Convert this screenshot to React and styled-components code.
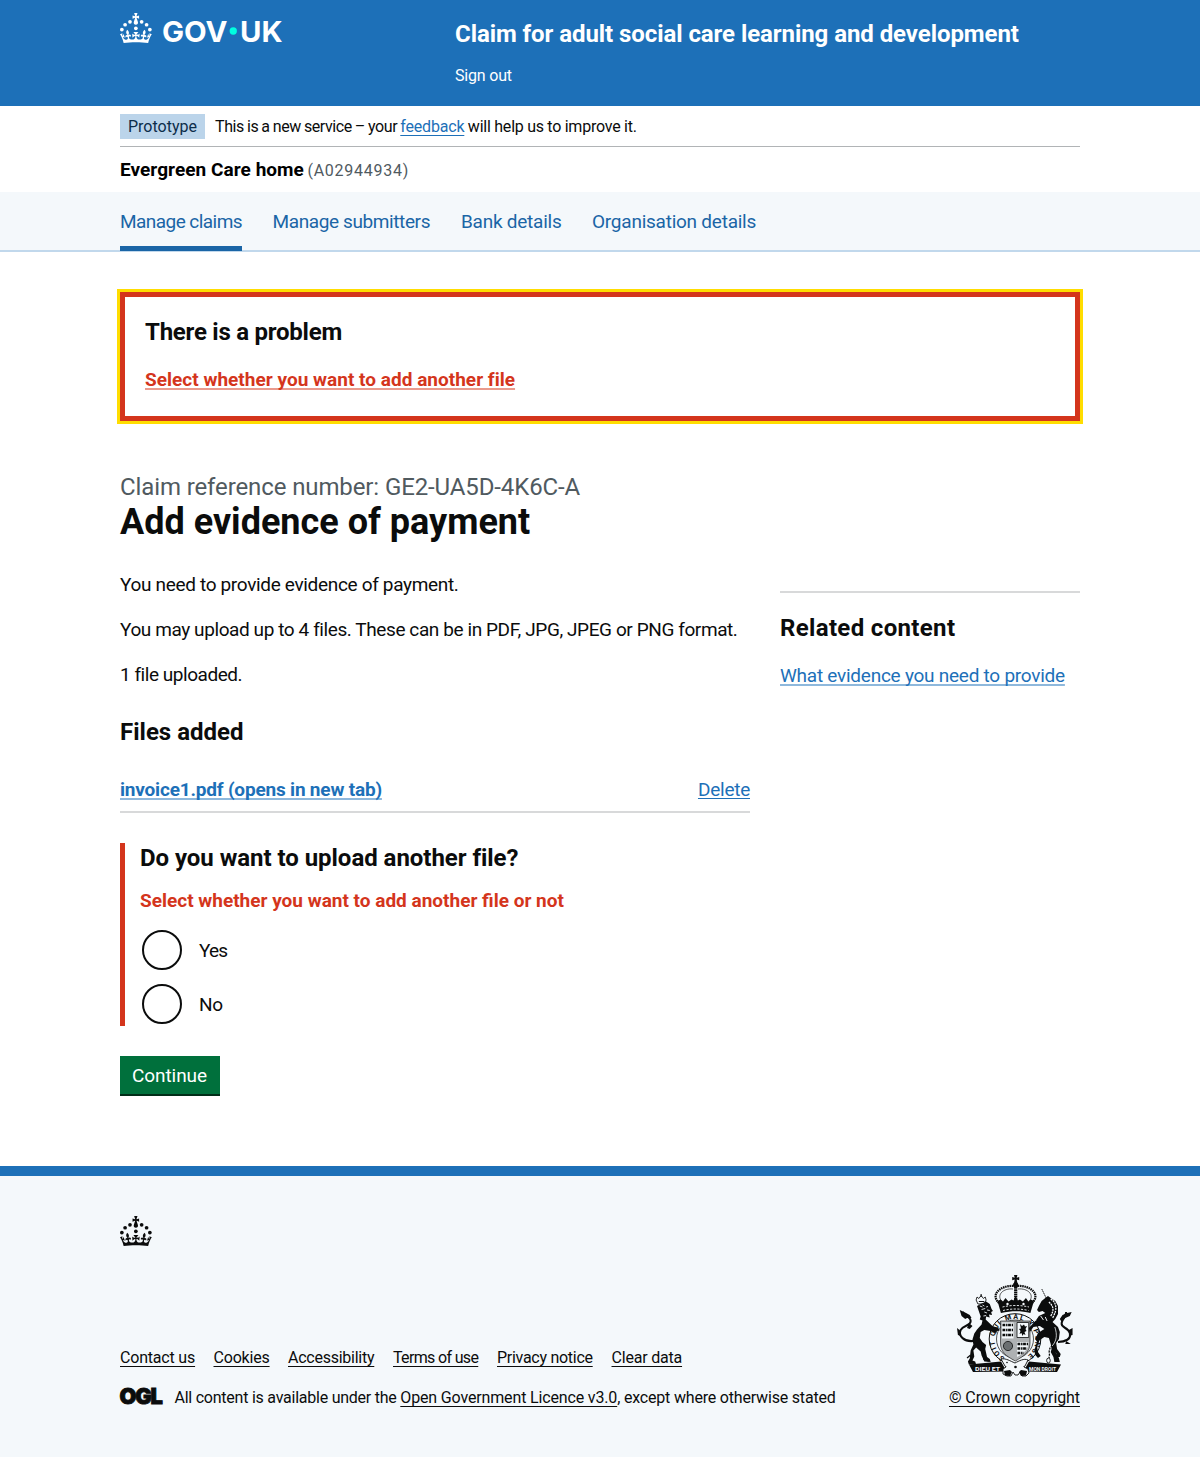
import React from "react";
import styled, { createGlobalStyle } from "styled-components";

const BLUE = "#1d70b8";
const INK = "#0b0c0c";
const RED = "#d4351c";
const PALE = "#f4f8fb";

const Global = createGlobalStyle`
  *, *::before, *::after { box-sizing: border-box; }
  body {
    margin: 0;
    background: #fff;
    color: ${INK};
    font-family: Roboto, "Liberation Sans", sans-serif;
    font-size: 19px;
    line-height: 25px;
  }
  h1, h2, p, ul, fieldset, legend { margin: 0; padding: 0; border: 0; }
  ul { list-style: none; }
`;

const Container = styled.div`
  width: 960px;
  margin: 0 auto;
`;

const Tracked = styled.span`
  letter-spacing: ${(p) => p.$t || 0}px;
  word-spacing: ${(p) => p.$w || 0}px;
  white-space: pre;
`;

const Link = styled.a`
  color: ${(p) => p.$color || BLUE};
  font-weight: ${(p) => (p.$bold ? 700 : 400)};
  letter-spacing: ${(p) => p.$t || 0}px;
  white-space: nowrap;
  text-decoration: underline;
  text-decoration-color: ${(p) => p.$line || "currentColor"};
  text-decoration-thickness: ${(p) => (p.$line ? 2 : 1)}px;
  text-underline-offset: ${(p) => p.$offset || 3}px;
  text-decoration-skip-ink: none;
`;

/* Header */
const Header = styled.header`
  height: 106px;
  background: ${BLUE};
  color: #fff;
`;
const HeaderRow = styled(Container)`
  display: grid;
  grid-template-columns: 335px 1fr;
  padding-top: 13px;
`;
const Logo = styled.svg`
  display: block;
  width: 162px;
  height: 30px;
  overflow: visible;
  fill: #fff;
`;
const LogoText = styled.text`
  font-family: Inter, Roboto, sans-serif;
  font-weight: 700;
  font-size: 58px;
`;
const ServiceName = styled.div`
  padding-top: 6px;
  font-size: 24px;
  line-height: 30px;
  font-weight: 700;
  letter-spacing: -0.07px;
`;
const SignOut = styled.div`
  margin-top: 17px;
  font-size: 16px;
  line-height: 20px;
  letter-spacing: -0.18px;
`;

/* Phase banner and organisation */
const PhaseBanner = styled(Container)`
  display: flex;
  align-items: center;
  height: 41px;
  border-bottom: 1px solid #b1b4b6;
  font-size: 16px;
  line-height: 20px;
`;
const Tag = styled.strong`
  width: 85px;
  height: 25px;
  margin-right: 10px;
  padding: 3px 0 0 8px;
  background: #bbd4ea;
  color: #0c2d4a;
  font-weight: 400;
`;
const PhaseText = styled.span`
  padding-top: 2px;
`;
const Organisation = styled(Container)`
  height: 45px;
  padding-top: 10px;
  color: #000;
  font-weight: 700;
  letter-spacing: 0.05px;
`;
const OrganisationId = styled.span`
  margin-left: 3.5px;
  color: #505a5f;
  font-size: 16px;
  font-weight: 400;
  letter-spacing: 0.75px;
`;

/* Navigation */
const Nav = styled.nav`
  height: 60px;
  background: ${PALE};
  border-bottom: 2px solid #c1d8ec;
`;
const NavList = styled.ul`
  display: flex;
  gap: 30.5px;
  width: 960px;
  height: 59px;
  margin: 0 auto;
`;
const NavItem = styled.li`
  width: ${(p) => p.$width}px;
  padding-top: 17px;
  border-bottom: ${(p) => (p.$active ? `5px solid #1a65a6` : "0")};
  color: #1a65a6;
  letter-spacing: ${(p) => p.$t}px;
  white-space: nowrap;
`;

/* Main */
const ErrorSummary = styled.section`
  height: 129px;
  margin-top: 40px;
  padding: 20px;
  border: 5px solid ${RED};
  outline: 3px solid #ffdd00;
`;
const Heading = styled.h2`
  font-size: 24px;
  line-height: 30px;
  font-weight: 700;
  letter-spacing: ${(p) => p.$t || 0}px;
  margin-bottom: ${(p) => p.$gap}px;
`;
const Columns = styled.div`
  display: grid;
  grid-template-columns: 630px 300px;
  gap: 30px;
  margin-top: 51px;
`;
const Caption = styled.span`
  display: block;
  color: #505a5f;
  font-size: 24px;
  line-height: 30px;
  letter-spacing: -0.11px;
`;
const Title = styled.h1`
  margin-bottom: 29px;
  font-size: 36px;
  line-height: 41px;
  font-weight: 700;
`;
const Paragraph = styled.p`
  margin-bottom: 20px;
  letter-spacing: ${(p) => p.$t}px;
  white-space: nowrap;
`;
const FilesSection = styled.section`
  padding-top: 10px;
`;
const FileRow = styled.div`
  display: flex;
  justify-content: space-between;
  height: 46px;
  padding-top: 10px;
  border-bottom: 2px solid #d8d9da;
`;
const FormGroup = styled.div`
  margin-top: 30px;
  height: 183px;
  padding-left: 15px;
  border-left: 5px solid ${RED};
`;
const ErrorMessage = styled.p`
  margin-bottom: 15px;
  color: ${RED};
  font-weight: 700;
`;
const Radios = styled.div`
  display: grid;
  gap: 10px;
`;
const RadioItem = styled.label`
  display: flex;
  align-items: center;
  gap: 17px;
  height: 44px;
  padding-left: 2px;
  letter-spacing: ${(p) => p.$t}px;
`;
const RadioDot = styled.span`
  width: 40px;
  height: 40px;
  border: 2px solid ${INK};
  border-radius: 50%;
`;
const Button = styled.button`
  display: block;
  width: 100px;
  height: 38px;
  margin-top: 30px;
  padding: 1px 1px 0 0;
  border: 0;
  background: #00703c;
  box-shadow: 0 2px 0 #002d18;
  color: #fff;
  font: inherit;
  letter-spacing: -0.08px;
`;
const Related = styled.aside`
  align-self: start;
  margin-top: 119px;
  padding-top: 20px;
  border-top: 2px solid #d8d9da;
`;

/* Footer */
const Footer = styled.footer`
  height: 292px;
  margin-top: 72px;
  padding-top: 40px;
  border-top: 10px solid ${BLUE};
  background: ${PALE};
  font-size: 16px;
  line-height: 20px;
`;
const FooterCrown = styled.svg`
  display: block;
  width: 32px;
  height: 30px;
  fill: ${INK};
`;
const FooterMeta = styled.div`
  display: flex;
  justify-content: space-between;
  align-items: flex-end;
  margin-top: 29px;
`;
const FooterLinks = styled.ul`
  display: flex;
  gap: 18.5px;
  margin-bottom: 20px;
`;
const LinkItem = styled.li`
  width: ${(p) => p.$width}px;
`;
const Licence = styled.div`
  display: flex;
  align-items: center;
`;
const OglLogo = styled.svg`
  display: block;
  width: 41px;
  height: 18px;
  margin: -5px 13.5px 0 0;
  overflow: visible;
`;
const OglText = styled.text`
  font-family: Inter, sans-serif;
  font-weight: 900;
  font-size: 21.5px;
  fill: ${INK};
  stroke: ${INK};
  stroke-width: 0.9px;
`;
const Copyright = styled.div`
  display: flex;
  flex-direction: column;
  align-items: center;
  gap: 11px;
  width: 131px;
`;
const Arms = styled.svg`
  display: block;
  width: 125px;
  height: 102px;
`;
const Motto = styled.text`
  font-family: Roboto, sans-serif;
  font-weight: 700;
  font-size: ${(p) => p.$size}px;
  fill: ${(p) => p.$fill};
`;

function CrownMark() {
  return (
    <g>
      <circle cx="20" cy="17.6" r="3.7" />
      <circle cx="10.2" cy="23.5" r="3.7" />
      <circle cx="3.7" cy="33.2" r="3.7" />
      <circle cx="31.7" cy="30.6" r="3.7" />
      <circle cx="43.3" cy="17.6" r="3.7" />
      <circle cx="53.2" cy="23.5" r="3.7" />
      <circle cx="59.7" cy="33.2" r="3.7" />
      <path d="M33.1,9.8c.2-.1.3-.3.5-.5l4.6,2.4v-6.8l-4.6,1.5c-.1-.2-.3-.3-.5-.5l1.9-5.9h-6.7l1.9,5.9c-.2.1-.3.3-.5.5l-4.6-1.5v6.8l4.6-2.4c.1.2.3.3.5.5l-2.6,8c-.9,2.8,1.2,5.7,4.1,5.7h0c3,0,5.1-2.9,4.1-5.7l-2.6-8ZM37,37.9s-3.4,3.8-4.1,6.1c2.2,0,4.2-.5,6.4-2.8l-.7,8.5c-2-2.8-4.4-4.1-5.7-3.8.1,3.1.5,6.7,5.8,7.2,3.7.3,6.7-1.5,7-3.8.4-2.6-2-4.3-3.7-1.6-1.4-4.5,2.4-6.1,4.9-3.2-1.9-4.5-1.8-7.7,2.4-10.9,3,4,2.6,7.3-1.2,11.1,2.4-1.3,6.2,0,4,4.6-1.2-2.8-3.7-2.2-4.2.2-.3,1.7.7,3.7,3,4.2,1.9.3,4.7-.9,7-5.9-1.3,0-2.4.7-3.9,1.7l2.4-8c.6,2.3,1.4,3.7,2.2,4.5.6-1.6.5-2.8,0-5.3l5,1.8c-2.6,3.6-5.2,8.7-7.3,17.5-7.4-1.1-15.7-1.7-24.5-1.7h0c-8.8,0-17.1.6-24.5,1.7-2.1-8.9-4.7-13.9-7.3-17.5l5-1.8c-.5,2.5-.6,3.7,0,5.3.8-.8,1.6-2.3,2.2-4.5l2.4,8c-1.5-1-2.6-1.7-3.9-1.7,2.3,5,5.2,6.2,7,5.9,2.3-.4,3.3-2.4,3-4.2-.5-2.4-3-3.1-4.2-.2-2.2-4.6,1.6-6,4-4.6-3.7-3.7-4.2-7.1-1.2-11.1,4.2,3.2,4.3,6.4,2.4,10.9,2.5-2.8,6.3-1.3,4.9,3.2-1.8-2.7-4.1-1-3.7,1.6.3,2.3,3.3,4.1,7,3.8,5.4-.5,5.7-4.2,5.8-7.2-1.3-.2-3.7,1-5.7,3.8l-.7-8.5c2.2,2.3,4.2,2.7,6.4,2.8-.7-2.3-4.1-6.1-4.1-6.1h10.6,0Z" />
    </g>
  );
}

function RoyalArms() {
  return (
    <Arms viewBox="0 0 125 102" fill={INK} stroke="none" aria-label="Royal coat of arms">
      {/* crown */}
      <path d="M62 0h3.4l-.7 2.7 2.5-.8v3.4l-2.5-.8.7 3.5h-3.4l.7-3.5-2.5.8V1.900l2.500.800z" />
      <circle cx="63.700" cy="10" r="2.700" />
      <path d="M47 28C38 20 48 10 62 11M80 28C89 20 79 10 65 11" fill="none" stroke={INK} strokeWidth="2.200" strokeDasharray="1.500 .7" />
      <path d="M49.500 26C44.500 20 51 13 61 14M77.500 26C82.500 20 76 13 66 14" fill="none" stroke={INK} strokeWidth=".7" />
      <path d="M63.700 12v13" stroke={INK} strokeWidth="3.200" strokeDasharray="1.700 .5" />
      <path d="M45.500 26l3-1.500 2.500 2 2.500-3.500 3 3.500 3-2 2 1 2.200-4.500 2.200 4.500 2-1 3 2 3-3.500 2.500 3.500 2.500-2 3 1.500-3.500 12c-9-2.500-19-2.500-29.500 0z" />
      <path d="M50.500 32c8-2 18-2 26.500 0M51 35.500c8-2 17-2 25.500 0" fill="none" stroke={PALE} strokeWidth=".9" strokeDasharray="2.200 1.400" />
      <circle cx="55.500" cy="29" r="1.200" fill={PALE} />
      <circle cx="71.500" cy="29" r="1.200" fill={PALE} />
      {/* garter */}
      <ellipse cx="63" cy="64" rx="25.800" ry="25.300" fill={PALE} stroke={INK} strokeWidth="1" />
      <ellipse cx="63" cy="64" rx="18.500" ry="19" fill="none" stroke={INK} strokeWidth=".7" />
      <path id="garter" d="M53 82.500A20.500 20.500 0 1 1 73 82.500" fill="none" />
      <Motto $size={7.2} $fill={INK}>
        <textPath href="#garter" textLength="104" lengthAdjust="spacing">SOIT QUI MAL Y PENSE</textPath>
      </Motto>
      {/* shield */}
      <path d="M48.500 46h29.500v22c0 9-6 13-14.700 18C54 81 48.500 77 48.500 68z" fill="#aeb1b3" stroke={INK} strokeWidth=".6" />
      <path d="M50 47.500h11.500v16H50z" fill={PALE} />
      <path d="M50.500 50h10.500M50.500 55h10.500M50.500 60h10.500" stroke={INK} strokeWidth="2.700" strokeDasharray="2.800 .8 1.400 .6" />
      <path d="M65 47.500h11.700v15H65z" fill={PALE} stroke={INK} strokeWidth=".8" />
      <path d="M68 49l2 2 2-1.500 1 2 2-.5-1.500 3 1 2-2 1 1 3-2-1-1 2-1-3-2 1 1-3-1.500-2 2-.5z" />
      <circle cx="56" cy="71" r="4.600" fill="#8c9092" stroke={INK} strokeWidth=".8" />
      <path d="M53 68v6M55 67v8M57 67v8M59 68v6" stroke={INK} strokeWidth=".5" />
      <path d="M65 67h11.500c0 7-4 11-11.500 15z" fill={PALE} />
      <path d="M65.500 69h11M65.500 73.500h9.500M65.500 78h6" stroke={INK} strokeWidth="2.600" strokeDasharray="2.800 .8 1.400 .6" />
      {/* lion */}
      <g transform="translate(4.100 0) scale(.91 1)">
        <path d="M22 25l1-3 2 1.500 2.500-3 2.500 3 2-1.500 1 3-2 4h-7z" fill={PALE} stroke={INK} strokeWidth=".9" />
        <path d="M27.500 19v3M25 26.500h6" stroke={INK} strokeWidth="1.200" />
        <path d="M23 31l4-2 6-2.500 4 2.500 2 5 1.500 2-2 1 1 3-3.500-.5 1 3-4-1-.5 3 8 7 5.500 1 2 3-3 .5-1 2-6-2-7-1-4 2-1 6 3 4 4 3-1 4 2 8 3 2 1 3-7-.5-3-6-1-4-5-4-3 3 1 6-2 4 3 1 1 3H14l-1-3 2-3 1-8 3-6-1-5 2-6 3-4 5-5 1-4-3-1 1-3z" />
        <path d="M26 31l3 1M28 34.500l4-1M31 37l3 1M33 32l2-.5M29 30l2 1M34 35l3 .5M30 41l3-.5" stroke={PALE} strokeWidth=".9" />
        <path d="M19 66C9 67 2 61 5 55c3-5 11-4 11-9 0-4-6-5-9-9" fill="none" stroke={INK} strokeWidth="2.200" />
        <path d="M4 35l2 6 4 3 2-1 5 0-2-3-4-2zM5 56l-4-3 1 7 3 1zM14 48l4 3-3 3-3-1z" />
        <path d="M16 80l-4 3M30 84l6 2" stroke={INK} strokeWidth="1.500" />
      </g>
      {/* unicorn */}
      <g transform="translate(6.800 0) scale(.91 1)">
        <path d="M91.200 14l5.300 10" stroke={INK} strokeWidth=".9" strokeDasharray="1.600 .5" />
        <path d="M88 31l3-5 4-3 3-2 3 2 5 3 3 5v8l-3 5-3 3-10 1-8-3 3-4 7-3-3-2-4 1-2-2z" />
        <path d="M101 24c6 3 8 10 2 19M99 27c5 4 6 8 2 14" fill="none" stroke={PALE} strokeWidth="1.400" strokeDasharray="2 .8" />
        <path d="M84 46c5-4 13-3 19 1l6 5 2 5-1 7-3 4 1 6 4 5-1 3-3 0-1-4-5-4-1-5-2-6-5-1-5 3-3 6 1 6 3 4-3 2-3-3-1-5 3-8-2-3 3-6 7-4-5-3-7 1-4 5-1-4z" />
        <path d="M95 42l2 4M90 41l3 4" stroke={PALE} strokeWidth="1" />
        <path d="M109 67c8 0 15-3 13-9s-10-5-9-10 5-6 5-11" fill="none" stroke={INK} strokeWidth="2.200" />
        <path d="M124 37l-2 4-5 2-4 4-2-3 3-4 5-2zM121 55l4-2 0 7-4 1zM118 66l5 3-6 0z" />
        <path d="M105 52c3 8 2 14-3 19s-1 8-3 12" fill="none" stroke={INK} strokeWidth="1.400" strokeDasharray="2.200 1" />
        <path d="M105.500 52c3 8 2 14-3 19" fill="none" stroke={PALE} strokeWidth=".8" />
        <ellipse cx="98.500" cy="85.500" rx="2" ry="2.400" fill={PALE} stroke={INK} strokeWidth=".9" />
        <path d="M103 71l4 7 3 5 1 4h-6l-1-5-3-5z" />
      </g>
      {/* ribbon */}
      <path d="M17 89.500l32-3 4 7 1 3-33 .5z" />
      <path d="M109 89.500l-32-3-4 7-1 3 33 .5z" />
      <Motto $size={5.5} $fill={PALE} x="23" y="95.500" textLength="25" lengthAdjust="spacingAndGlyphs">DIEU ET</Motto>
      <Motto $size={5.5} $fill={PALE} x="77" y="95.500" textLength="27" lengthAdjust="spacingAndGlyphs">MON DROIT</Motto>
      <path d="M49 84c5-1 9 2 14 4 4-2 9-5 13-3l-3 6-6 4h-9l-5-4z" fill={PALE} stroke={INK} strokeWidth=".9" />
      <path d="M54 92l-3 2 0 5 4 2h4l2-4 2 3 3 0 2-3 2 4h4l3-3-1-4-4-2" fill={PALE} stroke={INK} strokeWidth=".9" />
      <path d="M52 96l6-1 2 2-2 4-5-.5zM75 96l-6-1-2 2 2 4 5-.5z" />
      <circle cx="55" cy="87.500" r=".8" />
      <circle cx="63.500" cy="92" r="1.300" />
    </Arms>
  );
}

const NAV = [
  { label: "Manage claims", width: 122, t: -0.55, active: true },
  { label: "Manage submitters", width: 158, t: -0.39 },
  { label: "Bank details", width: 100.5, t: -0.24 },
  { label: "Organisation details", width: 164, t: -0.24 },
];

const FOOTER_LINKS = [
  { label: "Contact us", width: 75, t: -0.19 },
  { label: "Cookies", width: 56, t: -0.19 },
  { label: "Accessibility", width: 86.5, t: -0.25 },
  { label: "Terms of use", width: 85.5, t: -0.66 },
  { label: "Privacy notice", width: 96, t: -0.28 },
  { label: "Clear data", width: 71, t: -0.2 },
];

export default function App() {
  return (
    <>
      <Global />
      <Header>
        <HeaderRow>
          <Logo viewBox="0 0 324 60" aria-label="GOV.UK">
            <CrownMark />
            <LogoText x="84" y="57.500" textLength="131" lengthAdjust="spacingAndGlyphs">GOV</LogoText>
            <circle cx="226.500" cy="36" r="7.300" fill="#00ffe0" />
            <LogoText x="240" y="57.500" textLength="85" lengthAdjust="spacingAndGlyphs">UK</LogoText>
          </Logo>
          <div>
            <ServiceName>Claim for adult social care learning and development</ServiceName>
            <SignOut>Sign out</SignOut>
          </div>
        </HeaderRow>
      </Header>

      <PhaseBanner>
        <Tag>Prototype</Tag>
        <PhaseText>
          <Tracked $t={-0.42} $w={-0.45}>This is a new service – your </Tracked>
          <Link $t={-0.19}>feedback</Link>
          <Tracked $t={-0.2} $w={-0.25}> will help us to improve it.</Tracked>
        </PhaseText>
      </PhaseBanner>
      <Organisation>
        Evergreen Care home
        <OrganisationId>(A02944934)</OrganisationId>
      </Organisation>

      <Nav>
        <NavList>
          {NAV.map((n) => (
            <NavItem key={n.label} $width={n.width} $t={n.t} $active={n.active}>
              {n.label}
            </NavItem>
          ))}
        </NavList>
      </Nav>

      <Container as="main">
        <ErrorSummary>
          <Heading $t={-0.24} $gap={20}>There is a problem</Heading>
          <Link $bold $color={RED} $line="#ea9a8d" $offset={2} $t={0.02}>
            Select whether you want to add another file
          </Link>
        </ErrorSummary>

        <Columns>
          <div>
            <Caption>Claim reference number: GE2-UA5D-4K6C-A</Caption>
            <Title>Add evidence of payment</Title>
            <Paragraph $t={-0.33}>You need to provide evidence of payment.</Paragraph>
            <Paragraph $t={-0.41}>
              You may upload up to 4 files. These can be in PDF, JPG, JPEG or PNG format.
            </Paragraph>
            <Paragraph $t={-0.46}>1 file uploaded.</Paragraph>

            <FilesSection>
              <Heading $gap={20}>Files added</Heading>
              <FileRow>
                <Link $bold $line="#8eb8dc" $offset={2} $t={-0.19}>invoice1.pdf (opens in new tab)</Link>
                <Link $t={-0.25} $offset={2}>Delete</Link>
              </FileRow>
            </FilesSection>

            <FormGroup>
              <Heading $t={-0.04} $gap={15}>Do you want to upload another file?</Heading>
              <ErrorMessage>Select whether you want to add another file or not</ErrorMessage>
              <Radios>
                <RadioItem $t={-0.8}><RadioDot />Yes</RadioItem>
                <RadioItem $t={-0.2}><RadioDot />No</RadioItem>
              </Radios>
            </FormGroup>
            <Button>Continue</Button>
          </div>

          <Related>
            <Heading $t={0.34} $gap={20}>Related content</Heading>
            <Link $line="#8eb8dc" $offset={2} $t={-0.25}>What evidence you need to provide</Link>
          </Related>
        </Columns>
      </Container>

      <Footer>
        <Container>
          <FooterCrown viewBox="0 0 64 60"><CrownMark /></FooterCrown>
          <FooterMeta>
            <div>
              <FooterLinks>
                {FOOTER_LINKS.map((l) => (
                  <LinkItem key={l.label} $width={l.width}>
                    <Link $color={INK} $t={l.t}>{l.label}</Link>
                  </LinkItem>
                ))}
              </FooterLinks>
              <Licence>
                <OglLogo viewBox="0 0 41 18" aria-label="Open Government Licence">
                  <OglText x="-.5" y="17" textLength="42" lengthAdjust="spacingAndGlyphs" letterSpacing="-1.200">OGL</OglText>
                </OglLogo>
                <span>
                  <Tracked $t={-0.24}>All content is available under the </Tracked>
                  <Link $color={INK} $t={-0.15}>Open Government Licence v3.0</Link>
                  <Tracked $t={-0.19}>, except where otherwise stated</Tracked>
                </span>
              </Licence>
            </div>
            <Copyright>
              <RoyalArms />
              <Link $color={INK} $t={-0.09}>© Crown copyright</Link>
            </Copyright>
          </FooterMeta>
        </Container>
      </Footer>
    </>
  );
}
